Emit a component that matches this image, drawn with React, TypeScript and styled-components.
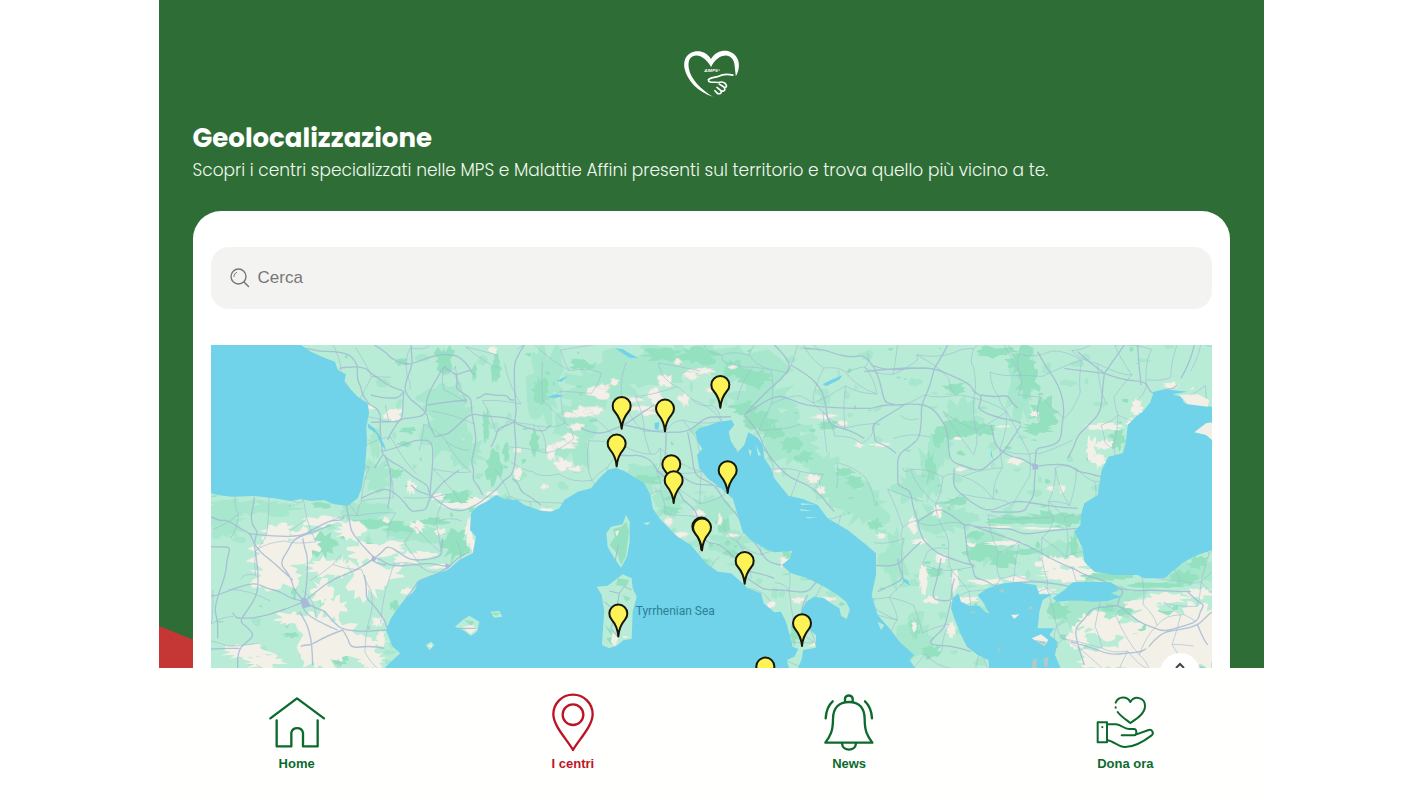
import React from "react";
import styled, { createGlobalStyle } from "styled-components";

const GlobalStyle = createGlobalStyle`
  *, *::before, *::after { box-sizing: border-box; }
  body { margin: 0; background: #ffffff; }
`;

const GREEN = "#2f6d36";
const RED = "#c43734";

const Shell = styled.div`
  display: flex;
  flex-direction: column;
  height: 100vh;
  max-width: 1105px;
  margin: 0 auto;
  font-family: "Liberation Sans", Arial, sans-serif;
`;

const Content = styled.main`
  flex: 1;
  min-height: 0;
  overflow-y: auto;
  scrollbar-width: none;
  padding: 47px 34px 0;
  background: linear-gradient(to top right, ${RED} 50%, ${GREEN} 50%) left bottom / 105px 42px no-repeat ${GREEN};
`;

const Logo = styled.svg`
  display: block;
  width: 60px;
  height: 53px;
  margin: 0 auto;
`;

const Title = styled.h1`
  margin: 20px 0 0;
  font: 700 26px/36px Poppins, Inter, sans-serif;
  color: #ffffff;
`;

const Subtitle = styled.p`
  margin: 2px 0 29px;
  font: 300 17px/24px Poppins, Inter, sans-serif;
  color: #f0faee;
`;

const Card = styled.section`
  padding: 36px 18px;
  background: #ffffff;
  border-radius: 28px;
`;

const SearchField = styled.label`
  display: flex;
  align-items: center;
  gap: 8px;
  height: 62px;
  margin-bottom: 36px;
  padding: 0 19px;
  border-radius: 18px;
  background: #f3f3f2;
  svg { flex: none; width: 20px; height: 20px; }
`;

const SearchInput = styled.input`
  flex: 1;
  min-width: 0;
  padding: 0;
  border: 0;
  outline: 0;
  background: transparent;
  font: 17px/24px "Liberation Sans", Arial, sans-serif;
  color: #444444;
  &::placeholder { color: #777777; opacity: 1; }
`;

const MapFrame = styled.div`
  position: relative;
  overflow: hidden;
  aspect-ratio: 1001 / 324;
  background: #70d3e9;
`;

const MapSvg = styled.svg`
  display: block;
  width: 100%;
  height: 100%;
`;

const MapButton = styled.button`
  position: absolute;
  right: 12px;
  bottom: -24px;
  display: flex;
  justify-content: center;
  width: 40px;
  height: 40px;
  padding: 9px 0 0;
  border: 0;
  border-radius: 50%;
  background: #ffffff;
  svg { width: 10px; height: 8px; }
`;

const TabBar = styled.nav`
  flex: none;
  display: grid;
  grid-template-columns: repeat(4, 1fr);
  height: 132px;
  padding-top: 25px;
  background: #fffffe;
`;

const Tab = styled.a<{ $active?: boolean }>`
  display: flex;
  flex-direction: column;
  align-items: center;
  gap: 3px;
  color: ${(p) => (p.$active ? "#bd1425" : "#0d6a2e")};
  font-size: 13px;
  font-weight: 700;
  line-height: 16px;
  text-decoration: none;
`;

const TabIcon = styled.svg`
  width: 60px;
  height: 60px;
  fill: none;
  stroke: currentColor;
  stroke-width: 7;
  stroke-linecap: round;
  stroke-linejoin: round;
`;

/* ---------- map terrain ---------- */

type Patch = [number, number, number, number];

const makeRandom = (seed: number) => {
  let s = seed;
  return () => {
    s = (s * 16807) % 2147483647;
    return s / 2147483647;
  };
};

const jagged = (patches: Patch[], seed: number, points = 15) => {
  const rnd = makeRandom(seed);
  return patches
    .map(([x, y, rx, ry]) => {
      let d = "";
      for (let i = 0; i < points; i++) {
        const a = (i / points) * Math.PI * 2;
        const r = 0.55 + rnd() * 0.75;
        d += `${i ? "L" : "M"}${Math.round(x + Math.cos(a) * rx * r)} ${Math.round(y + Math.sin(a) * ry * r)}`;
      }
      return d + "Z";
    })
    .join("");
};

const scatter = (count: number, seed: number, size: number) => {
  const rnd = makeRandom(seed);
  const list: Patch[] = [];
  for (let i = 0; i < count; i++) {
    list.push([rnd() * 3003, rnd() * 972, size * (0.3 + rnd()), size * (0.2 + rnd() * 0.7)]);
  }
  return list;
};

const minorRoads = () => {
  const rnd = makeRandom(4241);
  const step = 76;
  const cols = 41;
  const rows = 14;
  const nodes: [number, number][][] = [];
  for (let r = 0; r < rows; r++) {
    nodes.push([]);
    for (let c = 0; c < cols; c++) {
      nodes[r].push([c * step + (rnd() - 0.5) * 62, r * step + (rnd() - 0.5) * 62]);
    }
  }
  let d = "";
  const link = (a: [number, number], b: [number, number]) => {
    const mx = (a[0] + b[0]) / 2 + (rnd() - 0.5) * 36;
    const my = (a[1] + b[1]) / 2 + (rnd() - 0.5) * 36;
    d += `M${a[0].toFixed(0)} ${a[1].toFixed(0)}Q${mx.toFixed(0)} ${my.toFixed(0)} ${b[0].toFixed(0)} ${b[1].toFixed(0)}`;
  };
  for (let r = 0; r < rows; r++) {
    for (let c = 0; c < cols; c++) {
      const density = c < 13 ? 0.28 : 0.5;
      if (c + 1 < cols && rnd() < density) link(nodes[r][c], nodes[r][c + 1]);
      if (r + 1 < rows && rnd() < density) link(nodes[r][c], nodes[r + 1][c]);
      if (r + 1 < rows && c + 1 < cols && rnd() < 0.14) link(nodes[r][c], nodes[r + 1][c + 1]);
    }
  }
  return d;
};

/* Rounds each polyline by running quadratic curves through the segment midpoints, with a slight wobble. */
const winding = (lines: string[], seed: number) => {
  const rnd = makeRandom(seed);
  return lines
    .join("")
    .split("M")
    .filter(Boolean)
    .map((line) => {
      const n = (line.match(/\d+/g) || []).map(Number);
      const pts: [number, number][] = [];
      for (let i = 0; i + 1 < n.length; i += 2) {
        if (pts.length) {
          const [px, py] = pts[pts.length - 1];
          pts.push([(px + n[i]) / 2 + (rnd() - 0.5) * 16, (py + n[i + 1]) / 2 + (rnd() - 0.5) * 16]);
        }
        pts.push([n[i], n[i + 1]]);
      }
      let d = `M${pts[0][0]} ${pts[0][1]}`;
      for (let i = 1; i < pts.length - 1; i++) {
        const mx = (pts[i][0] + pts[i + 1][0]) / 2;
        const my = (pts[i][1] + pts[i + 1][1]) / 2;
        d += `Q${pts[i][0].toFixed(0)} ${pts[i][1].toFixed(0)} ${mx.toFixed(0)} ${my.toFixed(0)}`;
      }
      const last = pts[pts.length - 1];
      return `${d}L${last[0]} ${last[1]}`;
    })
    .join("");
};

const softForest: Patch[] = [
  [720, 230, 80, 100], [760, 320, 66, 50], [690, 160, 60, 40], [500, 390, 45, 45], [490, 300, 20, 45],
  [60, 490, 100, 28], [180, 490, 80, 22], [40, 540, 60, 40], [460, 505, 70, 38], [620, 570, 100, 28],
  [1000, 110, 50, 120], [1090, 250, 60, 120], [1160, 120, 110, 60], [1290, 70, 130, 55], [1440, 50, 150, 60],
  [1590, 60, 140, 60], [1650, 160, 90, 70], [1300, 390, 80, 30], [1370, 470, 50, 50], [1500, 500, 70, 50],
  [1560, 590, 60, 40], [1700, 240, 80, 50], [1750, 310, 80, 50], [1830, 370, 60, 50], [1890, 430, 70, 50],
  [1960, 480, 80, 60], [2160, 370, 36, 90], [2190, 300, 36, 60], [2250, 210, 60, 50], [2430, 130, 50, 100],
  [2200, 520, 80, 50], [2050, 640, 40, 90], [2110, 880, 70, 80], [2550, 620, 90, 30], [2340, 610, 70, 50],
  [2600, 800, 80, 50], [2700, 770, 120, 50], [2940, 680, 80, 45], [2100, 430, 50, 50],
];

const darkForest: Patch[] = [
  [700, 45, 30, 42], [570, 50, 18, 12], [580, 298, 20, 8], [555, 385, 20, 16], [590, 255, 22, 12],
  [825, 235, 12, 48], [850, 370, 24, 48], [885, 320, 10, 36], [855, 70, 14, 44], [790, 80, 8, 30],
  [745, 455, 50, 20], [500, 535, 70, 15], [575, 550, 60, 12], [660, 530, 50, 12], [735, 600, 40, 50],
  [335, 600, 45, 36], [335, 480, 35, 10], [215, 570, 10, 20], [250, 730, 10, 28], [460, 680, 16, 12],
  [990, 140, 26, 44], [970, 290, 14, 44], [390, 945, 20, 22], [240, 870, 26, 8], [550, 780, 12, 18],
  [1110, 60, 34, 18], [1350, 30, 60, 20], [1460, 30, 60, 28], [1570, 70, 40, 26], [1630, 100, 55, 28],
  [1600, 190, 40, 20], [1640, 225, 50, 30], [1690, 265, 30, 26], [1740, 300, 30, 20], [1780, 335, 26, 18],
  [1900, 380, 30, 14], [1930, 410, 30, 18], [1540, 545, 16, 24], [1380, 495, 30, 14], [1300, 405, 50, 14],
  [1730, 630, 22, 12], [1850, 240, 30, 14], [1470, 650, 22, 12], [1560, 625, 26, 12], [1750, 865, 16, 34],
  [2350, 20, 60, 16], [2430, 50, 42, 45], [2450, 110, 34, 45], [2500, 200, 40, 44], [2480, 250, 46, 18],
  [2230, 130, 36, 18], [2240, 250, 56, 30], [2310, 250, 50, 22], [2160, 370, 16, 55], [2180, 280, 16, 30],
  [2420, 525, 90, 16], [2520, 520, 80, 20], [2580, 525, 36, 18], [2290, 570, 26, 14], [2310, 620, 50, 26],
  [2380, 640, 46, 24], [2450, 620, 40, 10], [2240, 470, 36, 14], [2720, 280, 24, 35], [2690, 695, 70, 12],
  [2850, 720, 90, 8], [2920, 700, 36, 24], [2590, 600, 14, 40], [2540, 800, 36, 28], [2740, 800, 26, 12],
  [2790, 865, 18, 24], [2740, 905, 18, 16], [2690, 790, 26, 12], [2840, 805, 50, 8], [2960, 650, 30, 20],
  [2170, 680, 26, 14], [2110, 850, 16, 30], [2160, 920, 30, 22], [1990, 540, 24, 18],
];

const beige: Patch[] = [
  [545, 208, 28, 20], [600, 425, 16, 22], [680, 455, 22, 10], [740, 482, 60, 9], [800, 470, 38, 14],
  [845, 445, 24, 8], [920, 385, 14, 18], [1000, 425, 12, 8], [845, 15, 14, 12], [920, 315, 12, 8],
  [480, 186, 12, 7], [205, 560, 50, 24], [205, 620, 84, 66], [195, 690, 78, 42], [280, 590, 50, 40],
  [330, 530, 50, 15], [370, 525, 26, 9], [420, 560, 50, 28], [470, 620, 56, 34], [530, 610, 54, 22],
  [340, 665, 60, 26], [390, 670, 26, 34], [460, 700, 54, 64], [520, 690, 56, 28], [590, 640, 38, 22],
  [640, 630, 40, 12], [590, 740, 18, 14], [335, 740, 32, 36], [370, 790, 34, 36], [310, 850, 60, 56],
  [370, 870, 86, 48], [440, 900, 80, 46], [330, 925, 62, 46], [480, 945, 40, 28], [240, 820, 44, 20],
  [110, 920, 70, 26], [160, 950, 60, 20], [690, 665, 40, 7], [775, 560, 12, 40], [785, 600, 10, 22],
  [620, 545, 22, 18], [690, 560, 18, 10], [525, 525, 10, 9], [500, 830, 20, 14], [510, 880, 12, 26],
  [2010, 298, 28, 6], [2180, 500, 16, 20], [2105, 540, 14, 24], [2130, 590, 24, 10], [2010, 573, 14, 10],
  [2190, 640, 22, 12], [2138, 700, 14, 46], [2160, 765, 22, 12], [2230, 710, 14, 34], [2330, 710, 50, 9],
  [2420, 702, 40, 10], [2260, 765, 40, 12], [2220, 855, 14, 22], [2110, 845, 8, 16], [2240, 280, 12, 5],
  [2375, 244, 20, 4], [2470, 207, 16, 9], [2413, 347, 26, 12], [2250, 373, 16, 6], [2520, 430, 14, 9],
  [2554, 433, 8, 16], [2380, 595, 56, 8], [2280, 600, 16, 7], [2490, 550, 60, 4], [2370, 546, 34, 4],
  [2680, 245, 66, 10], [2640, 310, 16, 36], [2665, 345, 22, 26], [2680, 300, 26, 16], [2780, 190, 18, 24],
  [2760, 230, 14, 14], [2880, 122, 26, 10], [2520, 655, 40, 26], [2590, 650, 40, 16], [2560, 690, 66, 20],
  [2500, 738, 40, 9], [2620, 680, 46, 9], [2640, 830, 46, 30], [2600, 880, 34, 36], [2690, 850, 60, 34],
  [2800, 780, 56, 22], [2870, 760, 60, 16], [2960, 745, 46, 16], [2900, 860, 130, 70], [2800, 930, 170, 46],
  [2680, 940, 70, 34], [2960, 900, 90, 80], [2740, 850, 60, 24], [2960, 820, 60, 60], [2860, 900, 120, 60],
];

const snow: Patch[] = [
  [1162, 140, 40, 22], [1150, 195, 34, 12], [1120, 200, 32, 20], [1075, 210, 20, 8], [1095, 245, 24, 12],
  [1080, 280, 24, 16], [1060, 300, 36, 12], [1055, 360, 26, 22], [1095, 372, 18, 10], [1022, 320, 14, 26],
  [1000, 425, 10, 8], [1008, 495, 24, 6], [1360, 105, 24, 20], [1210, 112, 14, 10], [1180, 125, 20, 8],
  [1335, 155, 22, 22], [1290, 190, 46, 9], [1310, 205, 26, 8], [1420, 165, 20, 18], [1275, 165, 26, 8],
  [1400, 50, 12, 8], [1475, 78, 36, 11], [1440, 92, 26, 10], [1565, 66, 14, 6], [1500, 135, 16, 8],
  [1840, 215, 34, 8], [1895, 235, 16, 8], [1945, 300, 14, 9], [1805, 400, 22, 14], [1830, 435, 12, 12],
  [1700, 378, 12, 6], [1528, 525, 8, 18], [1375, 530, 12, 18], [1410, 570, 26, 8], [1465, 505, 22, 10],
  [1565, 572, 20, 6], [1720, 650, 14, 16], [1760, 765, 18, 9], [1680, 780, 14, 10], [1850, 762, 24, 6],
];

const mainRoads = [
  "M385 70L440 65 480 85 530 120 578 138 560 160 480 150",
  "M280 10L330 20 410 25 440 65 450 125 475 180 510 210 512 300 515 330 570 365 650 420 660 450",
  "M578 138L572 230 480 232 M510 320L600 290 665 288 660 410 655 455",
  "M490 0L540 40 600 58 690 28 730 30 770 60 790 90 M600 0L605 58 580 138 620 180 650 210 670 270",
  "M700 65L660 130 645 210 570 220 530 285 M700 65L735 90 780 75 M735 90L735 130 780 160 785 220 795 290 780 350 785 400 805 430 815 450",
  "M940 0L910 60 912 150 910 230 915 310 905 390 860 430 795 480 770 493 710 490 660 450 600 420",
  "M670 275L720 260 780 205 860 215 915 230 M795 160L820 145 890 150 910 165 M650 180L770 165",
  "M905 400L930 440 990 480 M915 235L1000 260 1020 240 M912 230L860 250 840 305",
  "M450 460L530 430 600 500 645 495 660 455 745 375 M520 330L540 400 530 490 M490 370L515 330",
  "M0 515L50 525 110 560 130 600 190 655 245 705 M130 455L120 510 140 560 130 600",
  "M110 565L270 575 360 525 400 515 M405 480L420 560 490 640 530 660 640 655 710 665",
  "M280 770L210 740 130 712 20 750 0 750 M280 770L250 735 205 655 250 580 360 540",
  "M280 770L290 640 275 580 M280 770L370 700 490 640 M280 770L340 795 395 855 525 855",
  "M280 770L200 800 90 820 65 803 M265 800L295 860 305 960 M270 770L290 810 380 855",
  "M395 855L300 900 270 905 M395 855L420 910 520 910 M0 605L60 605 45 680 10 790 20 880",
  "M130 600L140 750 85 830 130 870 85 910 80 972 M0 912L85 910",
  "M460 690L465 760 510 810 525 850 545 830 600 740 625 705 710 668 775 620",
  "M490 640L530 600 600 645 690 635 695 580 M525 660L490 650",
  "M1240 240L1350 262 1430 260 1490 215 1560 215 M1110 250L1180 265 1240 240 1330 180",
  "M1220 330L1290 330 1340 380 1400 430 1450 490 1480 590 1530 600 1610 680 1690 700",
  "M1365 262L1360 350 1450 420 1540 430 M1430 262L1450 390 1520 430 1570 500 1600 560",
  "M1600 210L1650 280 1680 340 1740 400 1830 450 1870 500 M1600 210L1700 150 1780 180 1980 190",
  "M1610 700L1670 735 1790 745 1850 690 M1790 750L1770 820 1745 850 M1600 560L1660 640 1710 660",
  "M1690 0L1740 60 1690 120 1600 210 M1740 60L1830 130 1850 240 1960 280",
  "M1780 10L1880 30 1960 30 2000 90 2020 170 2060 180 M1960 80L2150 70 M2080 180L1980 240 1990 290 2055 325",
  "M1980 60L2060 75 2170 70 2280 120 2310 150 2300 190 2370 220 2430 235",
  "M2170 70L2210 0 M2170 70L2130 180 2125 280 2060 330 2060 420 2100 440 2120 530",
  "M1980 190L2060 180 2160 185 2210 260 2220 350 2310 380 2370 330 2430 240",
  "M2310 150L2390 150 2420 190 M2470 365L2400 335 2350 290 2340 240 M2470 365L2570 360 2600 380 2670 395",
  "M2470 365L2475 310 2550 290 2560 200 2530 100 2480 20 M2475 360L2470 450 2440 500 2340 500",
  "M2230 370L2230 430 2330 500 2420 465 2600 490 M2680 85L2800 110 2820 145 2870 130 2900 120",
  "M2680 85L2740 0 M2680 85L2600 20 M2680 85L2670 200 2600 270 2570 340 M2680 85L2560 70",
  "M2780 0L2790 120 M2950 0L2910 100 M2260 540L2290 545 2380 550 2440 570 2600 550",
  "M2260 540L2270 640 2290 700 2350 725 2480 710 2600 730 M2290 545L2450 600 2560 660 2620 690 2720 730 2830 735 2940 740",
  "M2120 530L2150 600 2220 640 2290 660 M2120 530L2180 490 2260 540 M2190 640L2160 760 2220 765",
  "M1990 660L2060 660 2130 590 M2220 765L2230 700 M2060 640L2080 700 2000 740 M2220 770L2200 850 2150 900 2280 920",
  "M2620 960L2590 850 2640 790 2720 780 2780 830 2860 860 2960 830 2980 780 2930 740",
  "M2720 780L2740 740 2700 715 2610 735 M2580 890L2700 930 2800 920 2860 860 2960 840 3003 800 M2960 840L2990 900",
];

const roads = minorRoads();
const highways = winding(mainRoads, 733);

const westSea =
  "M518 972L535 955 568 925 545 905 535 880 525 855 540 820 560 790 590 755 612 735 620 710 665 690 710 675 745 645 785 625 790 600 795 575 777 555 780 505 800 483 830 468 855 450 880 462 920 465 940 480 990 497 1020 500 1045 490 1060 465 1100 440 1140 430 1165 400 1190 375 1215 368 1240 378 1275 400 1300 415 1318 450 1325 490 1345 520 1370 545 1400 575 1440 600 1465 630 1485 655 1520 680 1560 685 1590 710 1610 730 1650 745 1658 775 1690 802 1710 800 1725 830 1736 870 1745 905 1762 912 1750 935 1727 945 1735 972L1760 972 1773 940 1776 915 1815 908 1815 870 1792 850 1775 840 1770 800 1785 770 1810 755 1840 760 1860 775 1885 790 1890 812 1907 822 1918 795 1905 770 1880 750 1840 725 1790 700 1740 685 1712 660 1738 640 1743 618 1690 622 1660 610 1620 585 1595 560 1580 510 1565 460 1530 430 1490 400 1465 370 1458 330 1474 312 1460 290 1453 262 1465 250 1490 242 1520 232 1562 225 1570 240 1553 260 1560 290 1580 322 1600 300 1612 262 1640 278 1655 300 1660 340 1680 370 1690 400 1732 452 1775 462 1820 480 1850 520 1910 555 1960 595 1995 625 1995 690 1982 750 2000 810 2035 850 2070 895 2110 930 2095 945 2115 972Z";
const biscay =
  "M0 0L270 0 300 20 340 38 372 50 380 75 405 88 400 110 415 128 440 155 470 175 474 205 466 245 468 290 462 370 452 430 440 460 410 482 370 478 340 466 300 468 270 462 240 468 190 460 130 453 60 455 20 450 0 445Z";
const aegean =
  "M2335 972L2332 945 2300 930 2268 905 2250 870 2230 820 2220 790 2225 760 2242 745 2250 770 2275 782 2305 782 2322 800 2335 806 2318 775 2300 750 2330 730 2380 715 2420 712 2475 720 2485 748 2525 748 2495 765 2485 800 2480 850 2530 850 2515 870 2540 890 2532 930 2550 972Z M2525 760L2560 735 2585 712 2640 710 2700 712 2725 735 2700 745 2730 755 2690 768 2640 770 2600 765 2540 770Z";
const blackSea =
  "M3003 185L2965 180 2920 175 2910 155 2885 148 2930 140 2860 133 2828 140 2818 172 2795 200 2775 215 2750 240 2745 290 2735 325 2692 335 2672 375 2660 450 2620 475 2610 510 2608 540 2590 560 2615 610 2620 650 2650 680 2710 690 2780 690 2800 700 2860 700 2920 650 2960 630 3003 615Z";
const smallWater =
  "M470 235L490 250 505 270 520 300 525 318 512 300 495 265 472 250Z M1212 10L1235 12 1250 22 1280 40 1255 38Z M1035 108L1070 92 1052 110Z M1010 155L1040 148 1060 152 1030 160Z M1330 235L1345 230 1342 255 1332 252Z M1835 118L1860 105 1895 90 1885 104 1845 124Z M2075 700L2090 705 2098 722 2078 712Z M2340 310L2346 345 2339 330Z";

const pins: [number, number][] = [
  [1232, 183], [1362, 191], [1528, 120], [1217, 296], [1381, 358], [1388, 406],
  [1550, 376], [1471, 545], [1473, 548], [1601, 648], [1222, 806], [1773, 835], [1663, 965],
];

const Terrain = () => (
  <MapSvg viewBox="0 0 3003 972" preserveAspectRatio="xMidYMin slice" role="img" aria-label="Mappa dei centri">
    <rect width="3003" height="972" fill="#b9ecd6" />
    <path d={jagged(softForest, 77, 27)} fill="#a7e7cd" />
    <path d={jagged(scatter(260, 991, 20), 51, 9)} fill="#a8e7cd" />
    <path d={jagged(darkForest, 313, 23)} fill="#94e1c0" />
    <path d={jagged(scatter(170, 1871, 10), 87, 8)} fill="#94e0c0" />
    <path d={jagged(beige, 1203, 27)} fill="#f3f0e7" />
    <path d={jagged(snow, 619, 19)} fill="#f3f0ea" stroke="#dce4d9" strokeWidth="2" />
    <path d={roads} fill="none" stroke="#9dbcd0" strokeWidth="3" opacity="0.6" />
    <path d={highways} fill="none" stroke="#a0b8d2" strokeWidth="4" strokeLinejoin="round" opacity="0.8" />
    <path d="M268 765L280 755 292 768 298 785 275 790Z M485 632L496 640 490 652 480 645Z M702 655L722 662 706 674Z M2463 355L2480 358 2482 372 2465 374Z" fill="#a9b9d8" />
    <path d={westSea + biscay + aegean + blackSea + smallWater} fill="#70d3e9" />
    {/* islands */}
    <g fill="#b9ecd6">
      <path d="M1245 510L1256 530 1256 590 1248 635 1230 668 1210 640 1190 605 1186 565 1200 545 1235 538Z" />
      <path d="M1157 725L1190 722 1235 688 1262 700 1265 730 1277 755 1265 800 1262 882 1238 885 1220 900 1195 910 1173 900 1176 850 1180 800 1172 750Z" />
      <path d="M732 845L755 825 775 812 805 830 798 860 780 872 755 855Z M838 800L865 798 874 815 850 818Z M645 900L660 890 670 900 655 916Z" />
      <path d="M1612 312L1622 318 1618 335Z M1635 300L1650 330 1642 332Z M1770 475L1815 478 1770 480Z M1765 492L1805 498 1770 497Z M1782 515L1820 518 1790 520Z M1295 535L1318 530 1310 540Z M2000 830L2020 840 2010 855Z" />
    </g>
    <g fill="#94e0c0">
      <path d="M1246 530L1254 560 1250 590 1244 635 1230 660 1218 625 1196 600 1212 575 1206 552 1232 545Z M1220 700L1255 705 1245 725 1215 720Z M1180 840L1200 855 1220 875 1200 898 1185 880 1205 876Z M1235 750L1260 760 1245 770Z" />
      <path d="M760 825L790 830 780 842Z M840 803L868 804 855 812Z" />
    </g>
    <g fill="#f1efe6">
      <path d="M1212 560L1225 555 1218 575Z M1205 860L1222 880 1212 905 1200 890Z M1235 872L1258 876 1238 880Z M755 845L785 840 798 852 778 868Z M650 903L662 896 662 908Z" />
      <path d="M2950 262L2985 235 3003 232 3003 285 2985 270Z M2905 150L2960 148 2995 165 2990 185 2930 178Z M2800 905L2815 902 2810 915Z M2400 810L2425 808 2410 822Z M2462 880L2490 868 2512 885 2500 902Z M2945 125L2950 132 2938 134Z" />
      <path d="M1790 905L1812 892 1812 904Z" />
    </g>
    <path d="M2363 735L2380 733 2376 746Z M2433 762L2446 764 2438 768Z M2450 790L2464 782 2462 796Z M2465 945L2478 940 2476 972 2462 972Z M2498 940L2512 935 2510 965 2500 965Z M2358 905L2370 915 2364 920Z M2275 798L2295 802 2285 806Z M2470 885L2505 890 2500 900Z" fill="#aecbc8" />
    <path d="M1195 738L1225 745 1240 725 1262 735M1225 745L1215 800 1200 850 1222 878M1180 770L1215 800M740 850L795 850M1212 650L1222 600" fill="none" stroke="#9bbfd0" strokeWidth="3" />
    <text x="1274" y="809" fontFamily="Roboto, sans-serif" fontSize="36" fill="#2c7f95">Tyrrhenian Sea</text>
    {pins.map(([x, y]) => (
      <path
        key={`${x}-${y}`}
        transform={`translate(${x} ${y})`}
        d="M0 68C-2 44 -8 32 -20 18A27 27 0 1 1 20 18C8 32 2 44 0 68Z"
        fill="#fdf256"
        stroke="#151708"
        strokeWidth="6"
        strokeLinejoin="round"
      />
    ))}
  </MapSvg>
);

const tabs = [
  {
    label: "Home",
    box: "50 25 180 180",
    art: <path d="M60 101L140 41 221 101M79 107V185H123V144A18 18 0 0 1 158 144V185H202V107" />,
  },
  {
    label: "I centri",
    active: true,
    box: "53 25 180 180",
    art: (
      <>
        <path d="M143 196C128 168 84 125 84 89A59 59 0 0 1 202 89C202 125 158 168 143 196Z" />
        <circle cx="143" cy="90" r="31" />
      </>
    ),
  },
  {
    label: "News",
    box: "57 25 180 180",
    art: (
      <>
        <path d="M76 174H217C202 154 194 140 194 103C194 70 177 52 147 52C117 52 99 70 99 103C99 140 91 154 76 174Z" />
        <path d="M135 52V41A12 12 0 0 1 158 41V52M126 176C128 201 166 201 168 176M98 50C85 62 78 80 77 101M195 50C208 62 215 80 216 101" />
      </>
    ),
  },
  {
    label: "Dona ora",
    box: "58 25 180 180",
    art: (
      <g strokeWidth="6">
        <path d="M120 54C128 34 155 34 164 52C176 31 208 38 208 64C208 88 180 104 164 115C151 105 134 94 126 82M120 68V69" />
        <path d="M66 113H94V173H66ZM80 127V128M94 119H121C139 120 143 133 160 133H176C184 134 184 151 176 152H138M180 150L219 136C229 133 236 145 228 152C207 168 179 188 147 187C130 187 113 169 94 166" />
      </g>
    ),
  },
];

export default function App() {
  return (
    <>
      <GlobalStyle />
      <Shell>
        <Content>
          <Logo viewBox="32 20 180 160" role="img" aria-label="AIMPS">
            <path
              d="M122 56C108 34 88 30 70 34C46 40 38 62 42 84C50 122 83 156 128 170C92 148 61 118 55 84C51 58 62 46 78 46C97 47 111 62 122 80C133 60 148 46 168 46C186 48 194 64 194 84L197 108C209 88 209 64 199 50C184 30 160 28 144 36C133 41 127 48 122 56Z"
              fill="#ffffff"
            />
            <path
              d="M188 105C171 101 158 102 145 108C134 113 119 111 114 119C113 130 132 125 145 127C153 124 164 126 167 133C173 144 161 142 160 140C170 151 158 156 151 151C158 160 146 164 140 158M160 140L147 132M151 151L140 142M142 161L134 152"
              fill="none"
              stroke="#ffffff"
              strokeWidth="5"
              strokeLinecap="round"
              strokeLinejoin="round"
            />
            <text x="125" y="95" textAnchor="middle" fontFamily="Liberation Sans, sans-serif" fontWeight="700" fontStyle="italic" fontSize="13" fill="#ffffff">
              AIMPS°
            </text>
          </Logo>
          <Title>Geolocalizzazione</Title>
          <Subtitle>Scopri i centri specializzati nelle MPS e Malattie Affini presenti sul territorio e trova quello più vicino a te.</Subtitle>
          <Card>
            <SearchField>
              <svg viewBox="0 0 20 20" fill="none" stroke="#777777" strokeLinecap="round" aria-hidden="true">
                <circle cx="8.500" cy="8.500" r="7.500" strokeWidth="1.4" />
                <path d="M14 14L18.500 18.500" strokeWidth="1.5" />
                <path d="M4 8.500C4 6.500 5 5 6.500 4.500" strokeWidth="1" />
              </svg>
              <SearchInput type="search" placeholder="Cerca" aria-label="Cerca" />
            </SearchField>
            <MapFrame>
              <Terrain />
              <MapButton type="button" aria-label="Controlli della mappa">
                <svg viewBox="0 0 10 8" fill="none" stroke="#444444" strokeWidth="2" aria-hidden="true">
                  <path d="M1 6L5 2 9 6" />
                </svg>
              </MapButton>
            </MapFrame>
          </Card>
        </Content>
        <TabBar aria-label="Navigazione principale">
          {tabs.map((t) => (
            <Tab key={t.label} href="#" $active={t.active} aria-current={t.active ? "page" : undefined}>
              <TabIcon viewBox={t.box} aria-hidden="true">{t.art}</TabIcon>
              {t.label}
            </Tab>
          ))}
        </TabBar>
      </Shell>
    </>
  );
}
